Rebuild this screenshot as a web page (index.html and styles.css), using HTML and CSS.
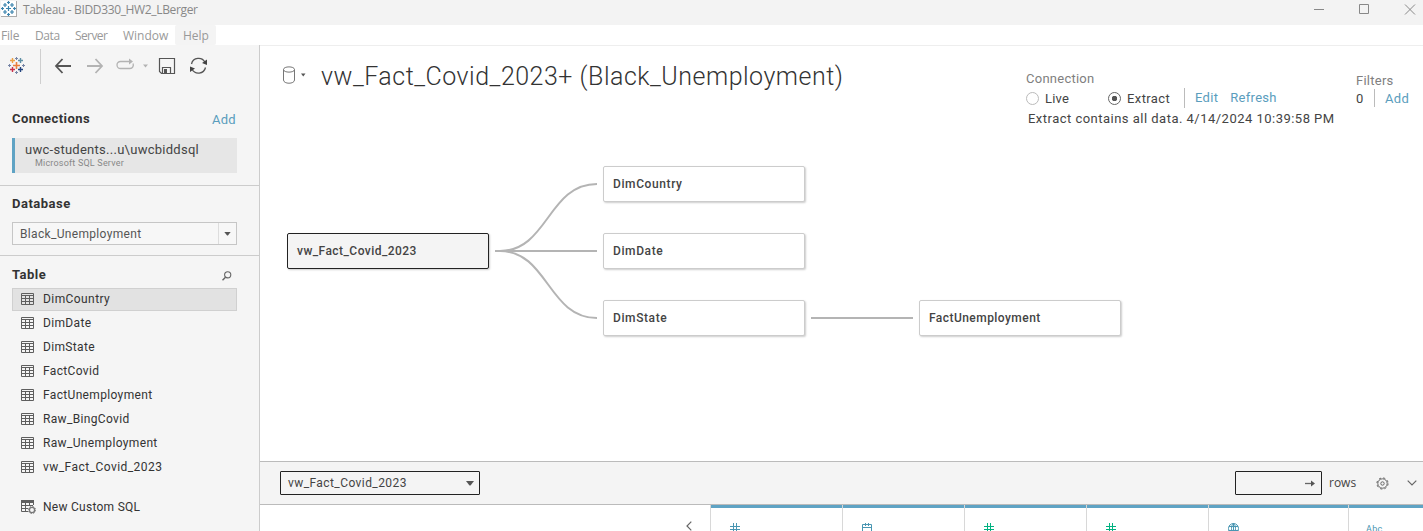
FILE: index.html
```html
<!DOCTYPE html>
<html lang="en">
<head>
<meta charset="utf-8">
<title>Tableau - BIDD330_HW2_LBerger</title>
<link rel="stylesheet" href="styles.css">
</head>
<body>
<svg class="defs" width="0" height="0">
  <defs>
    <symbol id="table" viewBox="0 0 13 12"><path d="M.5.5h12v11H.5zM0 2.5h13M1 5.5h11M1 8.5h11M4.5 3v8M8.5 3v8" fill="none" stroke="#5e5e5e"/></symbol>
    <symbol id="hash" viewBox="0 0 10 10"><path d="M3.5 0v10M6.5 0v10M0 3.5h10M0 6.5h10" fill="none" stroke="currentColor"/></symbol>
    <symbol id="caret" viewBox="0 0 8 5"><path d="M0 0h8L4.5 4.5h-1z" fill="#555"/></symbol>
  </defs>
</svg>
<div class="app">
  <header class="titlebar">
    <span class="app-icon"><svg width="15" height="15" viewBox="0 0 15 15"><path d="M7.5 5v5M5 7.5h5M7.5 0v3M6 1.5h3M7.5 12v3M6 13.5h3M0 7.5h3M1.5 6v3M12 7.5h3M13.5 6v3M4 2v4M2 4h4M11 2v4M9 4h4M4 9v4M2 11h4M11 9v4M9 11h4" fill="none" stroke="#3a83ad" stroke-width="1.2"/></svg></span>
    <span class="app-name">Tableau - BIDD330_HW2_LBerger</span>
    <svg class="window-controls" width="102" height="12" viewBox="0 0 102 12"><path d="M0 5.5h10M45.5.5h9v9h-9zM91 .5l10 10M101 .5l-10 10" fill="none" stroke="#888"/></svg>
  </header>
  <nav class="menubar">
    <span class="menu m-file">File</span><span class="menu m-data">Data</span><span class="menu m-server">Server</span><span class="menu m-window">Window</span><span class="menu m-help">Help</span>
  </nav>
  <div class="workspace">
    <aside class="sidebar">
      <div class="toolbar">
        <svg width="217" height="40" viewBox="0 0 217 40" fill="none">
          <path d="M16.5 17v7M13 20.5h7" stroke="#eb7e3b" stroke-width="1.6"/>
          <path d="M12.5 13v5M10 15.5h5" stroke="#eda143" stroke-width="1.4"/>
          <path d="M20.5 13v5M18 15.5h5" stroke="#5d8fa5" stroke-width="1.4"/>
          <path d="M12.5 22v5M10 24.500h5" stroke="#c9324c" stroke-width="1.4"/>
          <path d="M20.500 22v5M18 24.500h5" stroke="#24457f" stroke-width="1.4"/>
          <path d="M16.500 12v3M15 13.500h3M16.500 26v3M15 27.500h3M8 20.500h3M9.500 19v3M22 20.500h3M23.500 19v3" stroke="#7785a6"/>
          <path d="M40.500 4v35" stroke="#cfcfcf"/>
          <path d="M71 21H56m6.500-7L56 21l6.500 7" stroke="#555" stroke-width="1.8"/>
          <path d="M87 21h15m-6.500-7 6.500 7-6.500 7" stroke="#b3b3b3" stroke-width="1.800"/>
          <path d="M125 16.500h-4.500a3.500 3.500 0 0 0 0 7h9.500a3.500 3.500 0 0 0 3-5M124 16.500h7" stroke="#b3b3b3" stroke-width="1.300"/>
          <path d="M129 13.500l4 3-4 3z" fill="#b3b3b3"/>
          <path d="M143 19.500h5L145.500 22.500z" fill="#b3b3b3"/>
          <path d="M159.500 13.500h15v15h-13l-2-2zM162.500 28v-5.500h8V28" stroke="#555" stroke-width="1.200"/>
          <path d="M164 24h3v4h-3z" fill="#555"/>
          <path d="M191.500 19a7.200 7.200 0 0 1 13.500-1.500M205.500 22.500A7.200 7.200 0 0 1 192 24" stroke="#555" stroke-width="1.300"/>
          <path d="M207 14.500v5.500l-5-2zM190 27v-5.500l5 2z" fill="#444"/>
        </svg>
      </div>
      <section class="connections">
        <div class="head"><h2>Connections</h2><a class="add">Add</a></div>
        <div class="connection"><span class="conn-name">uwc-students...u\uwcbiddsql</span><span class="conn-type">Microsoft SQL Server</span></div>
      </section>
      <section class="database">
        <h2 class="db-title">Database</h2>
        <div class="db-select"><span>Black_Unemployment</span><i><svg width="7" height="4"><use href="#caret"/></svg></i></div>
      </section>
      <section class="tables">
        <div class="head"><h2 class="table-title">Table</h2><svg class="search" width="10" height="10" viewBox="0 0 10 10"><circle cx="5.700" cy="3.800" r="3.100" fill="none" stroke="#666" stroke-width="1.100"/><path d="M3.500 6.200.5 9.300" stroke="#666" stroke-width="1.400"/></svg></div>
        <ul>
          <li class="selected"><svg width="13" height="12"><use href="#table"/></svg><span class="t1">DimCountry</span></li>
          <li><svg width="13" height="12"><use href="#table"/></svg><span class="t2">DimDate</span></li>
          <li><svg width="13" height="12"><use href="#table"/></svg><span class="t3">DimState</span></li>
          <li><svg width="13" height="12"><use href="#table"/></svg><span class="t4">FactCovid</span></li>
          <li><svg width="13" height="12"><use href="#table"/></svg><span class="t5">FactUnemployment</span></li>
          <li><svg width="13" height="12"><use href="#table"/></svg><span class="t6">Raw_BingCovid</span></li>
          <li><svg width="13" height="12"><use href="#table"/></svg><span class="t7">Raw_Unemployment</span></li>
          <li><svg width="13" height="12"><use href="#table"/></svg><span class="t8">vw_Fact_Covid_2023</span></li>
          <li class="custom"><svg width="15" height="14" viewBox="0 0 15 14" fill="none"><path d="M0 1.500h13" stroke="#5e5e5e" stroke-width="3"/><path d="M.5 1v10.500H7M1 5.500h11M1 8.500h6M4.500 3v8M8.500 3v3M12.500 2v3" stroke="#5e5e5e"/><circle cx="11" cy="10" r="2.600" stroke="#777" stroke-width="1.300"/><circle cx="11" cy="10" r="3.600" stroke="#777" stroke-dasharray="1.400 1.430"/></svg><span class="t9">New Custom SQL</span></li>
        </ul>
      </section>
    </aside>
    <main>
      <div class="source-header">
        <svg class="cylinder" width="26" height="19" viewBox="0 0 26 19"><path d="M.5 3.500C.5 0 11.500 0 11.500 3.500v10.500c0 4.300-11 4.300-11 0zM.5 3.500c0 3.500 11 3.500 11 0" fill="none" stroke="#777"/><path d="M18 7.500h4.500L20.250 10.500z" fill="#555"/></svg>
        <h1>vw_Fact_Covid_2023+ (Black_Unemployment)</h1>
        <div class="connection-mode">
          <div class="label l-conn">Connection</div>
          <div class="modes">
            <span class="radio"></span><span class="live">Live</span>
            <span class="radio on"></span><span class="extract">Extract</span>
            <span class="actions"><a class="edit">Edit</a><a class="refresh">Refresh</a></span>
          </div>
          <div class="status">Extract contains all data. 4/14/2024 10:39:58 PM</div>
        </div>
        <div class="filters">
          <div class="label l-filters">Filters</div>
          <div class="filter-row"><span>0</span><a class="filter-add">Add</a></div>
        </div>
      </div>
      <div class="canvas">
        <svg class="links" width="880" height="200" viewBox="0 0 880 200"><path d="M220 101h5C273 101 273 34 322 34M220 101h102M220 101h5C273 101 273 168 322 168M536 168h102" fill="none" stroke="#b4b4b4" stroke-width="2"/></svg>
        <div class="node root"><span class="n1">vw_Fact_Covid_2023</span></div>
        <div class="node country"><span class="n2">DimCountry</span></div>
        <div class="node date"><span class="n3">DimDate</span></div>
        <div class="node state"><span class="n4">DimState</span></div>
        <div class="node fact"><span class="n5">FactUnemployment</span></div>
      </div>
      <div class="gridbar">
        <div class="grid-select"><span>vw_Fact_Covid_2023</span><svg width="8" height="5"><use href="#caret"/></svg></div>
        <div class="row-count"><svg width="10" height="7" viewBox="0 0 10 7"><path d="M0 3.500h7" stroke="#666" stroke-width="1.300"/><path d="M6 .5l4 3-4 3z" fill="#555"/></svg></div>
        <span class="rows">rows</span>
        <svg class="gear" width="13" height="13" viewBox="0 0 13 13" fill="none" stroke="#666"><circle cx="6.500" cy="6.500" r="4.700"/><circle cx="6.500" cy="6.500" r="5.600" stroke-dasharray="2.200 2.198"/><circle cx="6.500" cy="6.500" r="1.700"/></svg>
        <svg class="chev" width="10" height="6" viewBox="0 0 10 6"><path d="M.7.7 5 5 9.300.7" fill="none" stroke="#666" stroke-width="1.200"/></svg>
      </div>
      <div class="grid">
        <div class="gutter"><svg width="6" height="10" viewBox="0 0 6 10"><path d="M5.300.7 1 5l4.300 4.300" fill="none" stroke="#666" stroke-width="1.200"/></svg></div>
        <div class="col"><svg width="10" height="10"><use href="#hash"/></svg></div>
        <div class="col"><svg width="10" height="10" viewBox="0 0 10 10"><path d="M.5 1.500h9v8h-9zM0 4.500h10M3.500 0v3M6.500 0v3" fill="none" stroke="currentColor"/></svg></div>
        <div class="col green"><svg width="10" height="10"><use href="#hash"/></svg></div>
        <div class="col green"><svg width="10" height="10"><use href="#hash"/></svg></div>
        <div class="col"><svg width="11" height="11" viewBox="0 0 11 11"><path d="M.5 5.500a5 5 0 0 1 10 0 5 5 0 0 1-10 0M3.500 5.500c0-6 4-6 4 0s-4 6-4 0M1 3.500h9M.5 7.500h10M5.500 0v11" fill="none" stroke="currentColor"/></svg></div>
        <div class="col abc"><span>Abc</span></div>
      </div>
    </main>
  </div>
</div>
</body>
</html>
```
FILE: styles.css
```css
* { box-sizing: border-box; }
body { margin: 0; font: 13px/16px Roboto, "Liberation Sans", sans-serif; color: #444; background: #fff; }
h1, h2, ul { margin: 0; padding: 0; }
svg { display: block; flex: none; }
span, a, h1, h2 { white-space: nowrap; }
a { color: #5a9dbd; letter-spacing: .3px; }
.defs { position: absolute; }
.app { width: 1423px; height: 531px; display: flex; flex-direction: column; overflow: hidden; }
.titlebar { height: 25px; flex: none; display: flex; align-items: flex-start; background: #f3f3f3; }
.app-icon { width: 16px; height: 16px; margin: 1px 0 0 1px; background: #fff; border-right: 1px solid #aaa; border-bottom: 1px solid #aaa; }
.app-name { margin: 2px auto 0 6px; font: 12px/16px "Open Sans", sans-serif; color: #888; letter-spacing: -.35px; }
.window-controls { margin: 4px 7px 0 0; }
.menubar { height: 20px; flex: none; display: flex; font: 12px/21px "Open Sans", sans-serif; color: #999; }
.m-file { width: 35px; padding-left: 1px; letter-spacing: -.2px; }
.m-data { width: 40px; letter-spacing: -.4px; }
.m-server { width: 48px; letter-spacing: -.6px; }
.m-window { width: 52px; }
.m-help { width: 41px; padding-left: 8px; background: #f4f4f4; border-radius: 2px; }
.workspace { flex: 1; min-height: 0; display: flex; }
.sidebar { width: 260px; flex: none; border-right: 1px solid #ccc; background: #f5f5f5; }
.toolbar { height: 41px; }
h2 { font-size: 13px; line-height: 16px; font-weight: 700; color: #333; letter-spacing: .42px; }
.db-title, .table-title { letter-spacing: .5px; }
.head { display: flex; justify-content: space-between; }
.connections { height: 100px; padding: 25px 22px 0 12px; border-bottom: 1px solid #ccc; }
.connections .head { padding-right: 1px; height: 16px; }
.add { padding-top: 1px; }
.connection { height: 35px; margin-top: 11px; padding: 4px 0 0 10px; border-left: 3px solid #5fa3c4; background: #e6e6e6; display: flex; flex-direction: column; }
.conn-name { line-height: 15px; letter-spacing: .27px; }
.conn-type { padding-left: 10px; font-size: 9px; line-height: 13px; color: #888; letter-spacing: .2px; }
.database { height: 70px; padding: 10px 22px 0 12px; border-bottom: 1px solid #ccc; }
.db-select { height: 23px; margin-top: 10px; display: flex; justify-content: space-between; border: 1px solid #c6c6c6; padding-left: 7px; font-size: 12px; line-height: 22px; color: #555; background: #f7f7f7; letter-spacing: .33px; }
.db-select i { width: 18px; border-left: 1px solid #ddd; display: flex; align-items: center; justify-content: center; }
.tables { padding: 11px 22px 0 12px; }
.search { margin: 4px 5px 0 0; }
ul { list-style: none; margin-top: 5px; font-size: 12px; color: #333; letter-spacing: .34px; }
li { height: 24px; display: flex; align-items: center; padding: 0 0 3px 9px; gap: 9px; }
li.selected { height: 23px; margin-bottom: 1px; padding: 0 0 1px 8px; border: 1px solid #d0d0d0; background: #e2e2e2; }
li.custom { margin-top: 16px; gap: 7px; letter-spacing: .27px; }
.t1 { letter-spacing: .42px; }
.t8 { letter-spacing: .45px; }
main { flex: 1; min-width: 0; display: flex; flex-direction: column; border-top: 1px solid #eee; }
.source-header { height: 84px; flex: none; display: flex; align-items: flex-start; padding-left: 23px; }
.cylinder { margin: 20px 12px 0 0; }
h1 { width: 705px; font-size: 25px; line-height: 32px; font-weight: 300; margin-top: 15px; letter-spacing: .5px; color: #333; }
.connection-mode { width: 330px; padding-top: 25px; }
.label { color: #808080; letter-spacing: .25px; }
.modes { display: flex; align-items: center; height: 20px; margin-top: 1px; }
.radio { width: 13px; height: 13px; border: 1px solid #bbb; border-radius: 50%; }
.radio.on { border-color: #666; background: radial-gradient(circle, #555 2.500px, transparent 3px); }
.live { width: 63px; margin: 2px 0 0 6px; letter-spacing: .2px; }
.extract { width: 57px; margin: 2px 0 0 6px; letter-spacing: .4px; }
.actions { display: flex; height: 20px; border-left: 1px solid #bbb; padding: 2px 0 0 10px; gap: 12px; }
.status { margin: 3px 0 0 2px; white-space: nowrap; letter-spacing: .48px; }
.filters { padding-top: 27px; }
.filter-row { display: flex; height: 18px; line-height: 19px; }
.filter-row span { width: 18px; }
.filter-add { border-left: 1px solid #bbb; padding-left: 10px; }
.canvas { position: relative; flex: 1; }
.links { position: absolute; left: 15px; top: 20px; }
.node { position: absolute; width: 202px; height: 36px; border: 1px solid #ccc; border-radius: 2px; background: #fff; box-shadow: 1px 1px 2px rgba(0,0,0,.2); padding-left: 9px; font-size: 12px; font-weight: 500; line-height: 34px; letter-spacing: .6px; }
.node.root { left: 27px; top: 103px; border-color: #222; background: #f4f4f4; letter-spacing: .45px; }
.country { left: 343px; top: 36px; }
.date { left: 343px; top: 103px; }
.state { left: 343px; top: 170px; }
.node.fact { left: 659px; top: 170px; letter-spacing: .45px; }
.gridbar { height: 44px; flex: none; display: flex; align-items: center; background: #f4f4f4; border-top: 1px solid #bbb; border-bottom: 1px solid #bbb; padding-left: 20px; }
.grid-select { width: 200px; height: 24px; border: 1px solid #222; border-radius: 1px; display: flex; align-items: center; justify-content: space-between; padding: 0 5px 0 7px; font-size: 12px; letter-spacing: .42px; }
.row-count { width: 87px; height: 24px; margin-left: auto; border: 1px solid #222; border-radius: 1px; display: flex; align-items: center; justify-content: flex-end; padding-right: 6px; }
.rows { width: 47px; padding-left: 7px; font: 12px/16px "Open Sans", sans-serif; }
.gear { margin-left: 7px; }
.chev { margin: 0 6px 0 18px; }
.grid { height: 26px; flex: none; display: grid; grid-template-columns: 450px 132px 122px 122px 122px 140px 75px; overflow: hidden; }
.gutter { padding: 16px 0 0 426px; }
.col { border-left: 1px solid #d8d8d8; color: #4996b2; padding: 18px 0 0 19px; background: linear-gradient(#5fa3c4, #5fa3c4) top / 100% 3px no-repeat; }
.green { color: #00b180; }
.abc { font: 9px/12px Roboto, sans-serif; padding-left: 17px; letter-spacing: .3px; }
```
